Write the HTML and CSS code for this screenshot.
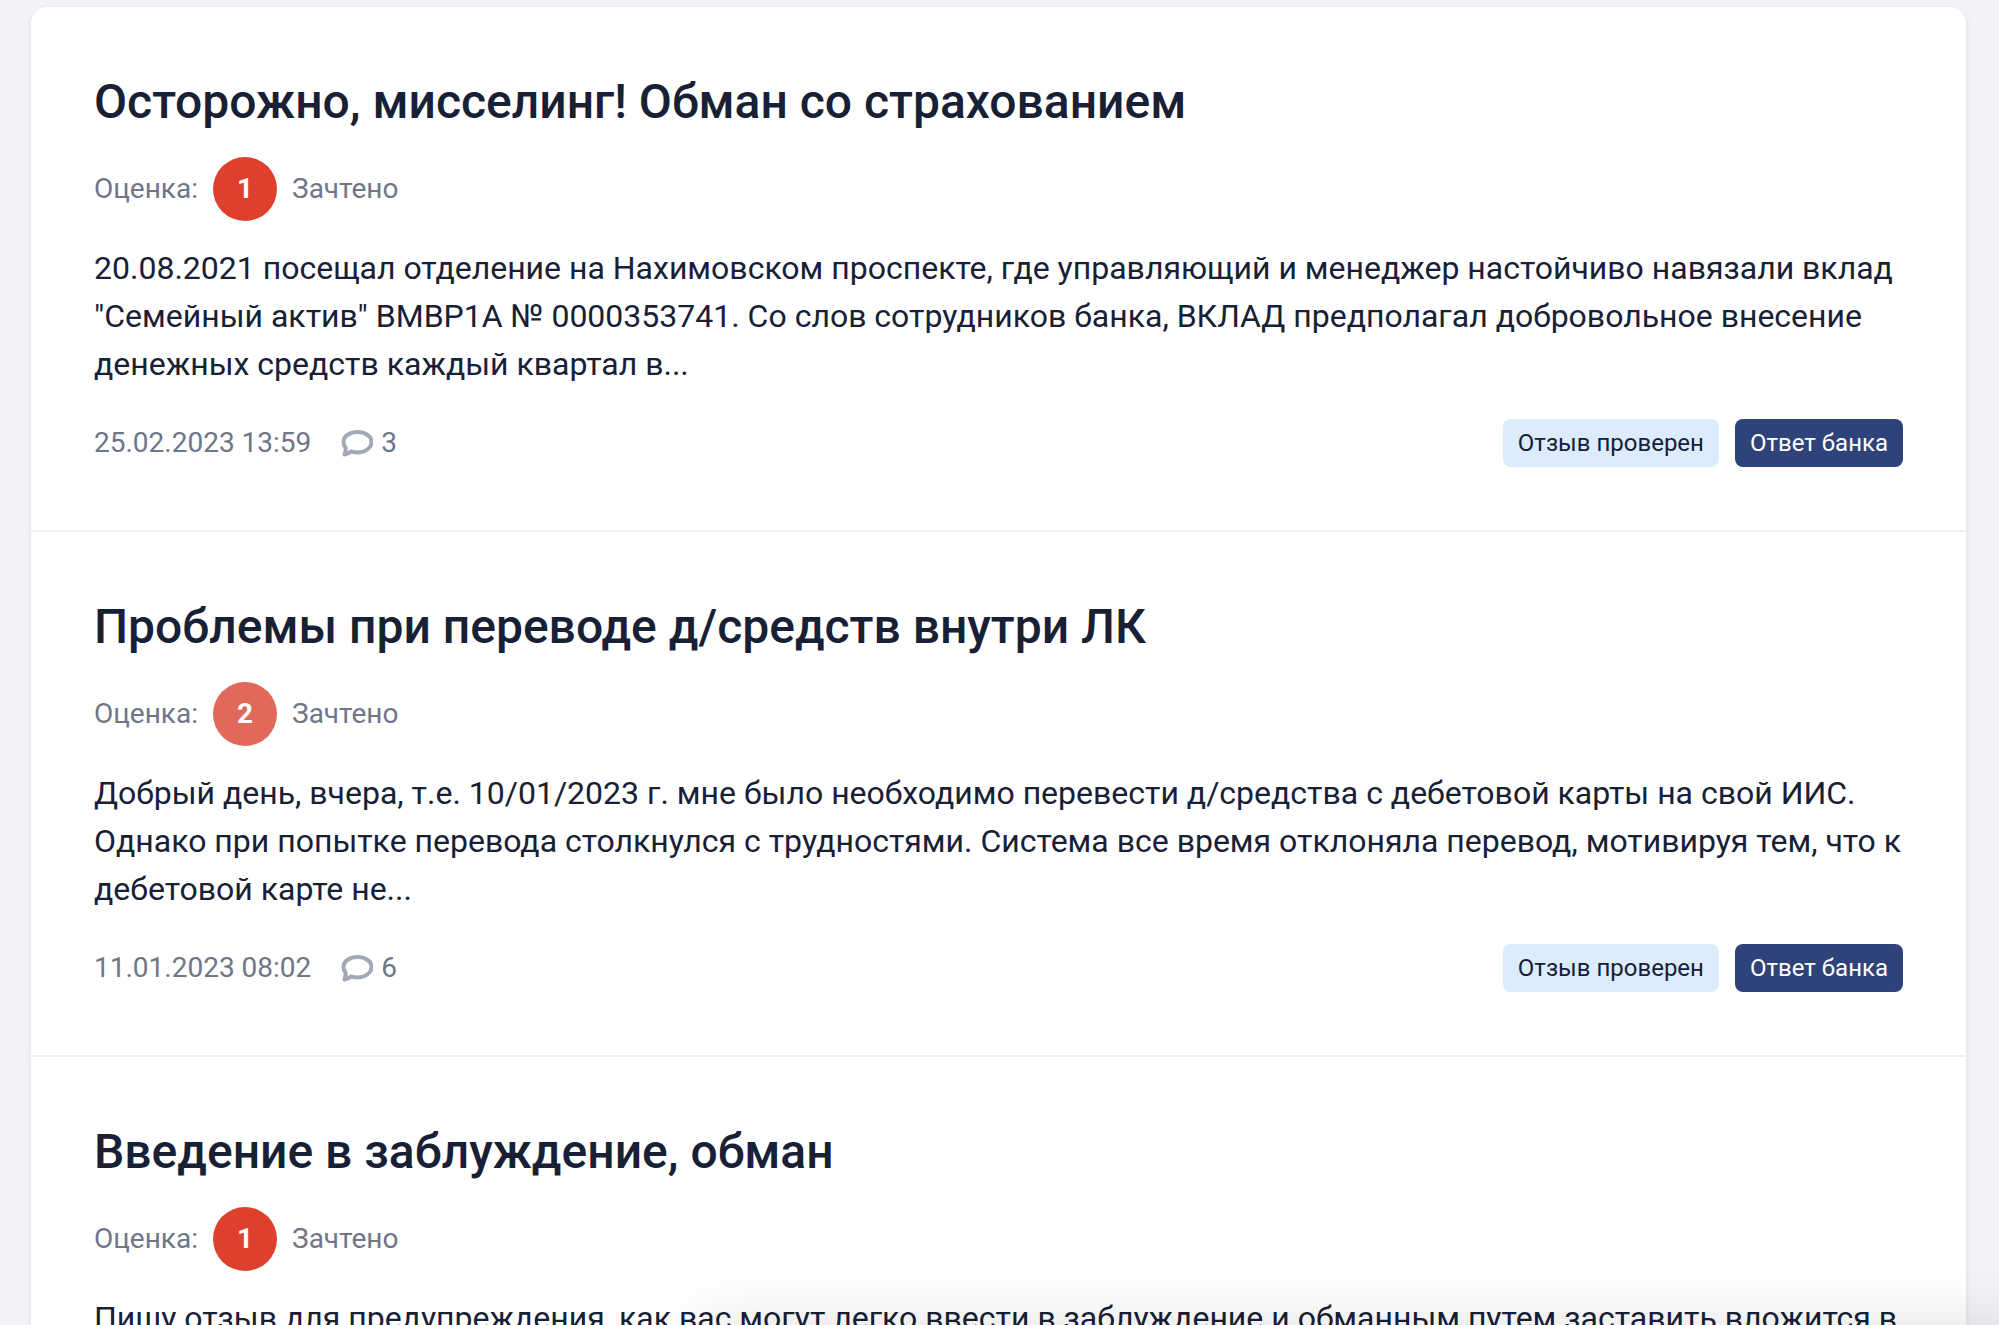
FILE: index.html
```html
<!DOCTYPE html>
<html lang="ru">
<head>
<meta charset="utf-8">
<meta name="viewport" content="width=device-width, initial-scale=1">
<title>Отзывы</title>
<link rel="stylesheet" href="styles.css">
</head>
<body>
<main class="reviews">
  <article class="review">
    <h2 class="review-title"><a href="#">Осторожно, мисселинг! Обман со страхованием</a></h2>
    <div class="rating"><span>Оценка:</span><span class="grade grade-1">1</span><span>Зачтено</span></div>
    <p class="review-text">20.08.2021 посещал отделение на Нахимовском проспекте, где управляющий и менеджер настойчиво навязали вклад "Семейный актив" ВМВР1А № 0000353741. Со слов сотрудников банка, ВКЛАД предполагал добровольное внесение денежных средств каждый квартал в...</p>
    <footer class="review-footer">
      <time>25.02.2023 13:59</time>
      <a class="comments" href="#"><svg class="bubble" viewBox="0 0 32 28" aria-hidden="true"><path d="M16.500 3C24 3 30.500 7 30.500 13S24 23.500 16.500 23.500C14 23.500 12 23 10 22.500C8 24.500 6 25 3.500 25.500C4.500 23 5 20.500 4.500 18.500C3 17 2.500 15 2.500 13C2.500 7 9 3 16.500 3Z"/></svg>3</a>
      <div class="tags"><span class="tag tag-checked">Отзыв проверен</span><span class="tag tag-answer">Ответ банка</span></div>
    </footer>
  </article>
  <article class="review">
    <h2 class="review-title"><a href="#">Проблемы при переводе д/средств внутри ЛК</a></h2>
    <div class="rating"><span>Оценка:</span><span class="grade grade-2">2</span><span>Зачтено</span></div>
    <p class="review-text">Добрый день, вчера, т.е. 10/01/2023 г. мне было необходимо перевести д/средства с дебетовой карты на свой ИИС. Однако при попытке перевода столкнулся с трудностями. Система все время отклоняла перевод, мотивируя тем, что к дебетовой карте не...</p>
    <footer class="review-footer">
      <time>11.01.2023 08:02</time>
      <a class="comments" href="#"><svg class="bubble" viewBox="0 0 32 28" aria-hidden="true"><path d="M16.500 3C24 3 30.500 7 30.500 13S24 23.500 16.500 23.500C14 23.500 12 23 10 22.500C8 24.500 6 25 3.500 25.500C4.500 23 5 20.500 4.500 18.500C3 17 2.500 15 2.500 13C2.500 7 9 3 16.500 3Z"/></svg>6</a>
      <div class="tags"><span class="tag tag-checked">Отзыв проверен</span><span class="tag tag-answer">Ответ банка</span></div>
    </footer>
  </article>
  <article class="review">
    <h2 class="review-title"><a href="#">Введение в заблуждение, обман</a></h2>
    <div class="rating"><span>Оценка:</span><span class="grade grade-1">1</span><span>Зачтено</span></div>
    <p class="review-text">Пишу отзыв для предупреждения, как вас могут легко ввести в заблуждение и обманным путем заставить вложится в</p>
  </article>
</main>
<div class="bottom-panel"></div>
</body>
</html>
```

FILE: styles.css
```css
* { box-sizing: border-box; }
html { overflow: hidden; }
body {
  margin: 0;
  height: 100vh;
  overflow: hidden;
  padding: 7px 33px 0 31px;
  background: #f3f4f9;
  color: #172035;
  font-family: Roboto, "Liberation Sans", sans-serif;
}
a { color: inherit; text-decoration: none; }
.reviews {
  background: #fff;
  border-radius: 16px;
  box-shadow: 0 2px 6px rgba(20, 33, 51, 0.1);
}
.review { padding: 64px 56px 63px 63px; }
.review + .review { border-top: 2px solid #efeff1; }
.review-title {
  margin: 0 0 24px;
  font-size: 48px;
  line-height: 62px;
  font-weight: 500;
}
.rating {
  display: flex;
  align-items: center;
  gap: 15px;
  margin-bottom: 23px;
  color: #6e7688;
  font-size: 28px;
  line-height: 40px;
}
.grade {
  width: 64px;
  height: 64px;
  border-radius: 50%;
  color: #fff;
  font-weight: 700;
  line-height: 64px;
  text-align: center;
}
.grade-1 { background: #dd412d; }
.grade-2 { background: #e1695c; }
.review-text {
  margin: 0 0 31px;
  font-size: 32px;
  line-height: 48px;
}
.review-footer {
  display: flex;
  align-items: center;
  gap: 30px;
  margin-right: 7px;
  color: #6e7688;
  font-size: 28px;
  line-height: 48px;
}
.comments { display: flex; align-items: center; gap: 8px; }
.bubble {
  width: 32px;
  height: 28px;
  fill: none;
  stroke: #a2a8b6;
  stroke-width: 4;
  stroke-linejoin: round;
}
.tags { display: flex; gap: 16px; margin-left: auto; }
.tag {
  padding: 0 15px;
  border-radius: 8px;
  font-size: 24px;
  line-height: 48px;
}
.tag-checked { background: #dcecfd; color: #172035; }
.tag-answer { background: #2f437a; color: #fff; }

.bottom-panel {
  position: fixed;
  top: 100%;
  left: 35%;
  right: -40px;
  height: 200px;
  box-shadow: 0 0 64px rgba(0, 0, 0, 0.12);
}
```
